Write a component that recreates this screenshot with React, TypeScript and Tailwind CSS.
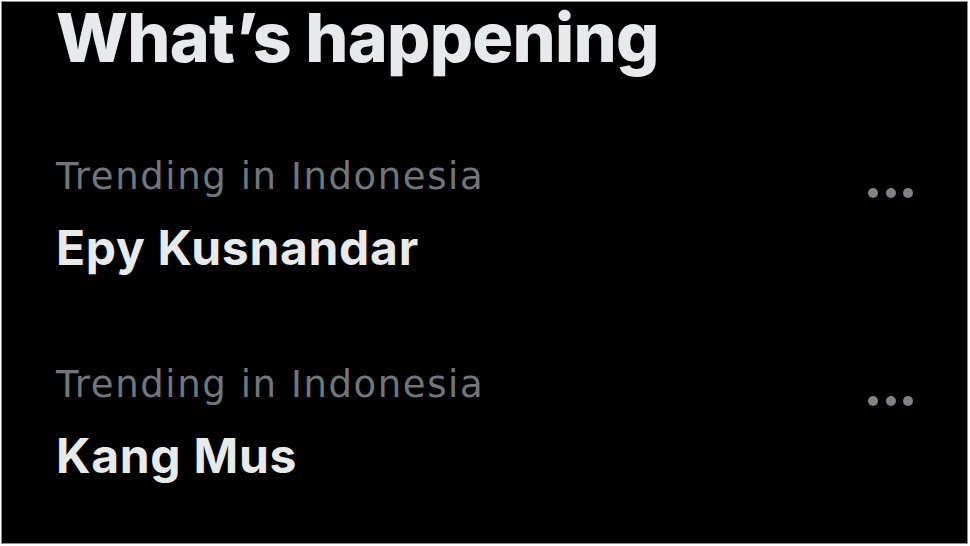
import React from 'react';

const trends = [
  { place: 'Trending in Indonesia', topic: 'Epy Kusnandar' },
  { place: 'Trending in Indonesia', topic: 'Kang Mus' },
];

const MoreDots = () => (
  <div className="flex items-center gap-[7.5px] pt-[31px]">
    <span className="w-[10px] h-[10px] rounded-full bg-[#7f8286]"></span>
    <span className="w-[10px] h-[10px] rounded-full bg-[#7f8286]"></span>
    <span className="w-[10px] h-[10px] rounded-full bg-[#7f8286]"></span>
  </div>
);

const App = () => {
  return (
    <div className="w-[970px] h-[546px] bg-white pt-px pl-px">
      <div
        className="w-[967px] h-[543px] bg-black border border-[#8c8c8c] pl-[54px] pr-[54px]"
        style={{ fontFamily: 'Inter, "Noto Sans", sans-serif' }}
      >
        <h2 className="pt-px text-[68px] leading-[68px] font-extrabold tracking-[-0.7px] text-[#e7e9ea]">
          What’s happening
        </h2>

        <div className="pt-[86px] flex flex-col gap-[89px]">
          {trends.map((trend, index) => (
            <div key={index} className="flex justify-between items-start">
              <div className="flex flex-col">
                <span
                  className="text-[37px] leading-[40px] tracking-[1.6px] text-[#71767b]"
                  style={{ fontFamily: '"DejaVu Sans", sans-serif' }}
                >
                  {trend.place}
                </span>
                <span className="mt-[23px] text-[48px] leading-[56px] font-bold tracking-[0.7px] text-[#e7e9ea]">
                  {trend.topic}
                </span>
              </div>
              <MoreDots />
            </div>
          ))}
        </div>
      </div>
    </div>
  );
};

export default App;
